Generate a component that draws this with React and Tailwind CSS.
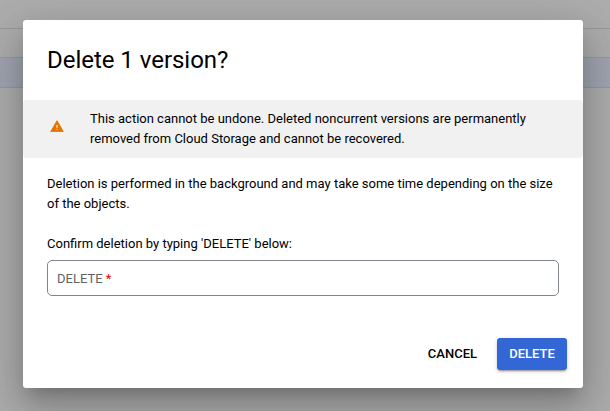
import React from "react";

function Backdrop() {
  return (
    <div className="col-start-1 row-start-1 flex h-[411px] flex-col bg-[#adadad]">
      <div className="h-[29px] border-b border-[#989898]" />
      <div className="h-[29px] border-b border-[#989898]" />
      <div className="h-[30px] border-b border-[#989898] bg-[#a0a5b1]" />
    </div>
  );
}

function WarningIcon() {
  return (
    <svg width="14" height="12" viewBox="0 0 14 12" aria-hidden="true">
      <path d="M7 0.7 13.3 11.6H0.7Z" fill="#e37400" stroke="#e37400" strokeWidth="0.9" strokeLinejoin="round" />
      <path d="M6.5 4.9h1v2.9h-1zM6.5 8.7h1v1.1h-1z" fill="#fff" />
    </svg>
  );
}

export default function App() {
  return (
    <div className="grid h-[411px] w-[610px] overflow-hidden font-['Roboto',sans-serif] text-black">
      <Backdrop />
      <div
        role="dialog"
        className="z-10 col-start-1 row-start-1 mt-5 ml-[23px] flex h-[368px] w-[560px] flex-col rounded-[3px] bg-white text-[13px] leading-5 shadow-[0_11px_15px_-7px_rgba(0,0,0,0.2),0_24px_38px_3px_rgba(0,0,0,0.14),0_9px_46px_8px_rgba(0,0,0,0.12)]"
      >
        <h1 className="h-20 px-6 pt-6 text-2xl leading-8 font-normal tracking-[-0.03px]">Delete 1 version?</h1>
        <div className="flex h-[58px] items-start rounded-[4px] bg-[#f1f1f1] pt-[9px] pl-[27px]">
          <div className="w-10 shrink-0 pt-[11px]">
            <WarningIcon />
          </div>
          <p className="whitespace-nowrap">
            This action cannot be undone. Deleted noncurrent versions are permanently
            <br />
            removed from Cloud Storage and cannot be recovered.
          </p>
        </div>
        <div className="px-6 pt-4">
          <p className="whitespace-nowrap">
            Deletion is performed in the background and may take some time depending on the size
            <br />
            of the objects.
          </p>
          <p className="mt-5">Confirm deletion by typing 'DELETE' below:</p>
          <div className="mt-[6px] flex h-9 items-center rounded-[5px] border border-[#80868b] px-[9px] pt-[2px] text-[#5f6368]">
            <span>
              DELETE <span className="text-[#f00000]">*</span>
            </span>
          </div>
        </div>
        <div className="mt-auto mb-[18px] flex justify-end gap-3 pr-4 font-medium">
          <button className="h-8 px-2">CANCEL</button>
          <button className="h-8 w-[70px] rounded-[3px] bg-[#3367d6] text-white shadow-[0_3px_1px_-2px_rgba(0,0,0,0.2),0_2px_2px_0_rgba(0,0,0,0.14),0_1px_5px_0_rgba(0,0,0,0.12)]">
            DELETE
          </button>
        </div>
      </div>
    </div>
  );
}
